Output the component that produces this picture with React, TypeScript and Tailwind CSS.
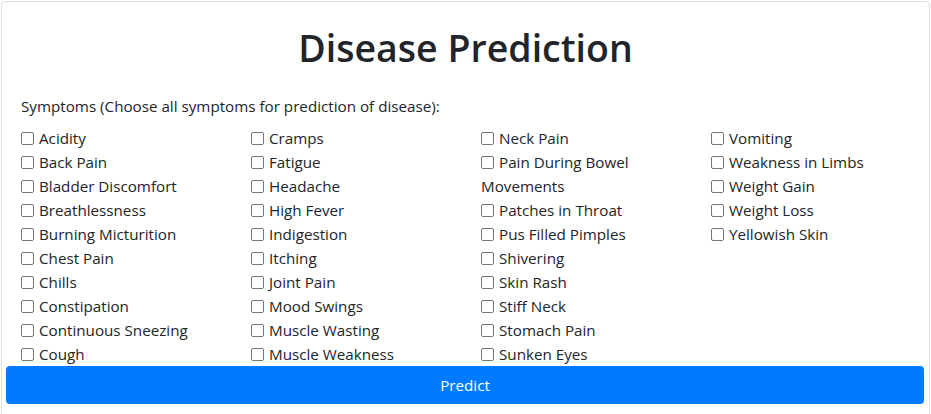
import React from 'react';

const columns: string[][] = [
  [
    'Acidity',
    'Back Pain',
    'Bladder Discomfort',
    'Breathlessness',
    'Burning Micturition',
    'Chest Pain',
    'Chills',
    'Constipation',
    'Continuous Sneezing',
    'Cough',
  ],
  [
    'Cramps',
    'Fatigue',
    'Headache',
    'High Fever',
    'Indigestion',
    'Itching',
    'Joint Pain',
    'Mood Swings',
    'Muscle Wasting',
    'Muscle Weakness',
  ],
  [
    'Neck Pain',
    'Pain During Bowel Movements',
    'Patches in Throat',
    'Pus Filled Pimples',
    'Shivering',
    'Skin Rash',
    'Stiff Neck',
    'Stomach Pain',
    'Sunken Eyes',
  ],
  ['Vomiting', 'Weakness in Limbs', 'Weight Gain', 'Weight Loss', 'Yellowish Skin'],
];

const Symptom = ({ name }: { name: string }) => (
  <label className="block text-[15.2px] leading-[24px] text-[#212529]">
    <span className="inline-block w-[13px] h-[13px] mr-[5px] align-[-1px] rounded-[2px] border border-[#767676] bg-white"></span>
    {name}
  </label>
);

export default function App() {
  return (
    <div
      className="min-h-screen bg-white px-px pt-px"
      style={{ fontFamily: '"Open Sans", "Noto Sans", sans-serif' }}
    >
      <div className="border border-[#dfdfdf] rounded-[4px] px-1 pb-4 w-[929px] overflow-hidden">
        <div className="pl-[15px]">
          {/* Title */}
          <h1 className="mt-[22px] text-center text-[37.5px] leading-[48px] font-semibold text-[#212529] pr-[15px]">
            Disease Prediction
          </h1>

          <div className="mt-[22px] mb-2 text-[15.2px] leading-[24px] text-[#212529]">
            Symptoms (Choose all symptoms for prediction of disease):
          </div>

          {/* Symptom columns */}
          <div className="grid grid-cols-[repeat(4,230px)]">
            {columns.map((col, i) => (
              <div key={i} className="w-[212px]">
                {col.map((s) => (
                  <Symptom key={s} name={s} />
                ))}
              </div>
            ))}
          </div>
        </div>

        <button className="block w-[918px] h-[38px] rounded-[4px] bg-[#007bff] text-white text-[15.2px] leading-[24px]">
          Predict
        </button>
      </div>
    </div>
  );
}
